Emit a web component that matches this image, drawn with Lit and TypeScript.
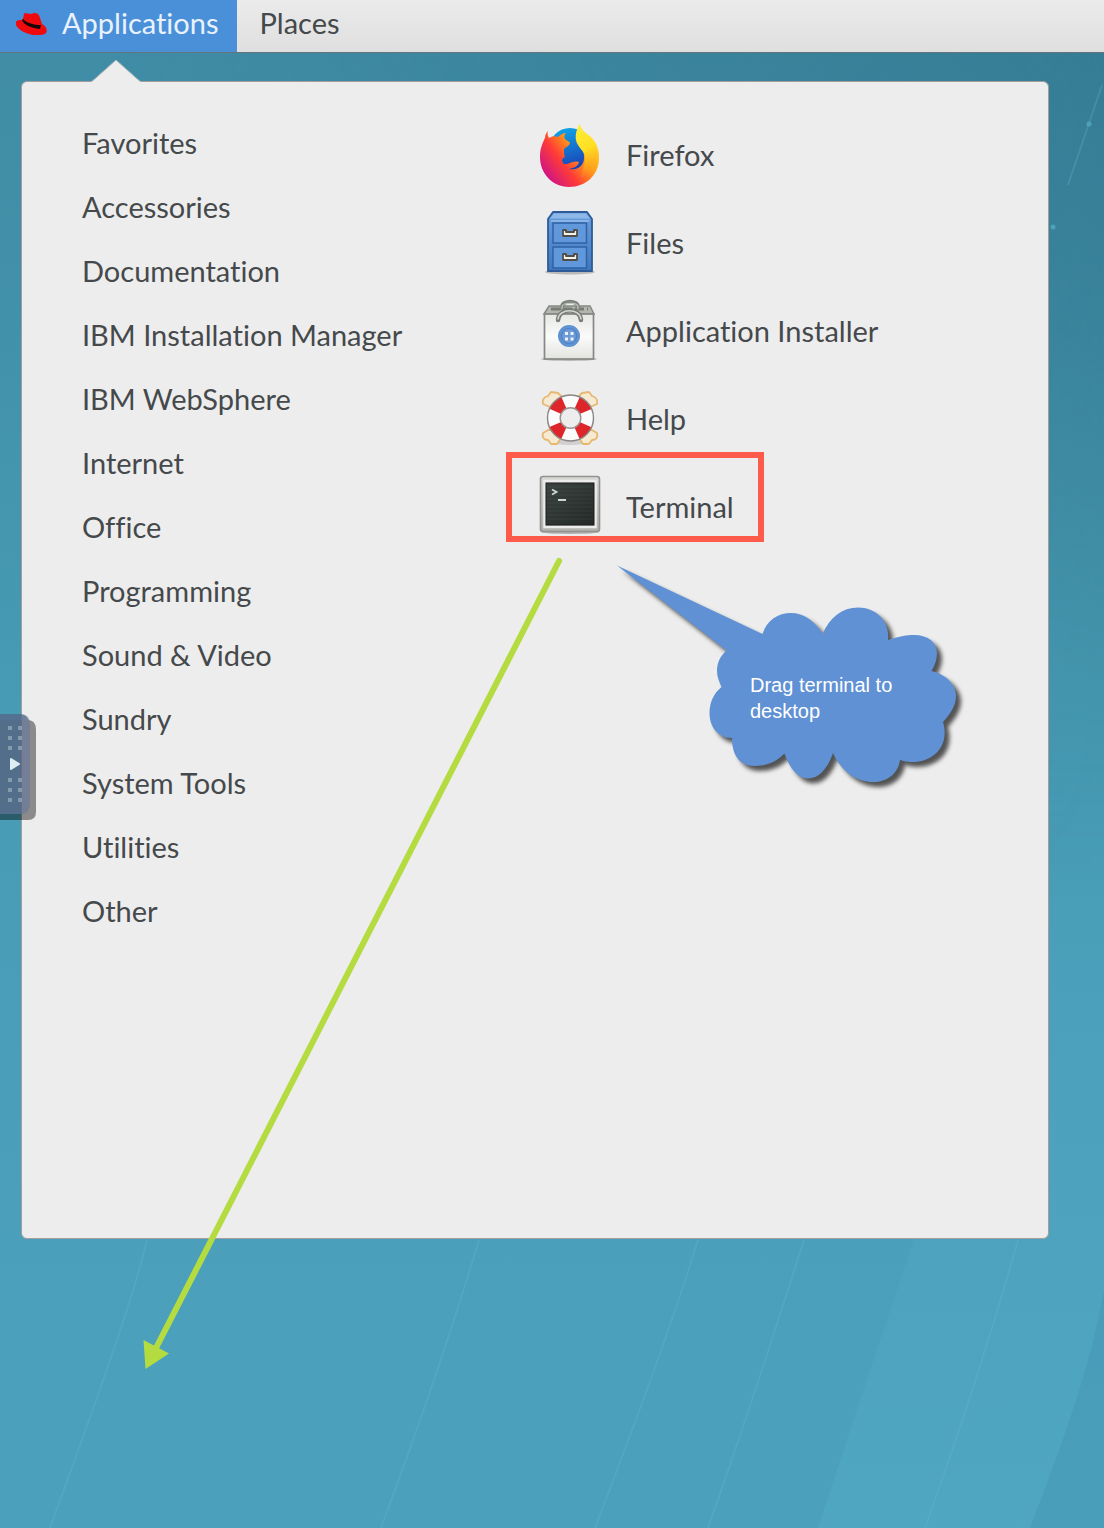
import { LitElement, html, css, svg } from "lit";
import { customElement, state } from "lit/decorators.js";

const hatIcon = html`<svg class="hat" viewBox="0 0 32 24" aria-hidden="true">
  <path d="M0 11C-1 15 3 19 10 22c7 3 17 3 20 0 2-3 0-7-4-9L24 7C23 3 21 2 18 2l-3 1-6-1C7 3 8 8 6 9 3 9 1 9 0 11Z" fill="#f00a0e"/>
  <path d="M6 9c1 4 8 8 18 9l1-4C18 14 11 12 7 8Z" fill="#160608"/>
</svg>`;

const firefoxIcon = svg`
  <defs>
    <linearGradient id="flame" x1="0.900" y1="0.200" x2="0.100" y2="0.800">
      <stop offset="0" stop-color="#ffd226"/><stop offset=".35" stop-color="#ff961a"/>
      <stop offset=".65" stop-color="#ff3b38"/><stop offset="1" stop-color="#d01583"/>
    </linearGradient>
    <linearGradient id="globe" x1=".3" y1="0" x2=".6" y2="1">
      <stop offset="0" stop-color="#10a4e8"/><stop offset="1" stop-color="#1b3fb4"/>
    </linearGradient>
    <linearGradient id="tail" x1="0" y1="0" x2=".3" y2="1">
      <stop offset="0" stop-color="#fff03a"/><stop offset=".55" stop-color="#ffdf22"/><stop offset="1" stop-color="#ffa51a" stop-opacity="0"/>
    </linearGradient>
  </defs>
  <circle cx="32" cy="26" r="21" fill="url(#globe)"/>
  <path d="M10 8c-1 3 0 5 1 7 3-2 6-2 9-1 2-2 5-4 8-4-2 2-2 4-1 6 2 2 4 2 5 4-1 4-6 4-6 7 0 3 0 5 1 7-3 1-4 4-1 7 5 1 8-4 15-2-1 4-5 6-10 7 8 2 15-3 15-11 1-7-4-9-6-15-1-5 0-10 1-15 3 5 8 7 12 12 5 5 8 11 8 18 0 17-13 29-30 29S2 50 2 34c0-9 3-15 5-19 0-3 1-5 3-7Z" fill="url(#flame)"/>
  <path d="M42 1c1 7 7 9 12 14 5 6 8 13 7 20-1 9-8 17-18 22 0-8 5-15 4-24-1-6-8-9-9-16-1-6 1-12 4-16Z" fill="url(#tail)"/>`;

const filesIcon = svg`
  <defs>
    <linearGradient id="cabinet" x1="0" y1="0" x2="0" y2="1">
      <stop offset="0" stop-color="#6a9fdd"/><stop offset="1" stop-color="#3f77bf"/>
    </linearGradient>
  </defs>
  <ellipse cx="32" cy="61" rx="25" ry="2.500" fill="#000" opacity=".22"/>
  <path d="M15 1h34l5 7v52H10V8Z" fill="url(#cabinet)" stroke="#2e5b97" stroke-width="1.800" stroke-linejoin="round"/>
  <path d="M16 2.500h32l4 5H12Z" fill="#8db8e8"/>
  <path d="M13 10h38" stroke="#88b4e6" stroke-width="2"/>
  <rect x="15" y="12" width="33.500" height="20" fill="#6098db" stroke="#2f62a6" stroke-width="1.500"/>
  <rect x="15" y="36" width="33.500" height="21" fill="#6098db" stroke="#2f62a6" stroke-width="1.500"/>
  <g fill="#f4f3eb" stroke="#514e48" stroke-width="1.800" stroke-linejoin="round">
    <path d="M25 19v6h14v-6h-3v2h-8v-2Z"/>
    <path d="M25 43v6h14v-6h-3v2h-8v-2Z"/>
  </g>`;

const installerIcon = svg`
  <defs>
    <linearGradient id="bag" x1="0" y1="0" x2="0" y2="1">
      <stop offset="0" stop-color="#e6e8e4"/><stop offset=".5" stop-color="#fbfbfa"/><stop offset="1" stop-color="#e3e4e0"/>
    </linearGradient>
  </defs>
  <ellipse cx="31" cy="60" rx="28" ry="2" fill="#000" opacity=".22"/>
  <path d="M6 15l5-8h41l4 8Z" fill="#b2b6af" stroke="#858983" stroke-width="1.500"/>
  <path d="M13 10h37" stroke="#777c75" stroke-width="3" stroke-dasharray="9 3"/>
  <path d="M24 11V8c0-7 16-7 16 0v3" fill="none" stroke="#80857e" stroke-width="4"/>
  <path d="M24 10V8c0-5 16-5 16 0v2" fill="none" stroke="#c9ccc6" stroke-width="1.200"/>
  <rect x="6.500" y="15" width="49" height="45" fill="url(#bag)" stroke="#858983" stroke-width="1.700"/>
  <path d="M20 21c1-13 22-13 23 0" fill="none" stroke="#777d76" stroke-width="4.500" stroke-linecap="round"/>
  <path d="M20 20c1-11 22-11 23 0" fill="none" stroke="#d4d7d2" stroke-width="1.500" stroke-linecap="round"/>
  <circle cx="31" cy="37" r="11" fill="#5f92d2"/>
  <circle cx="31" cy="37" r="7.500" fill="#6c9bd6" stroke="#4d80c3" stroke-width="1"/>
  <g fill="#edf2f8"><rect x="27" y="33" width="3" height="3"/><rect x="32.500" y="33" width="3" height="3"/><rect x="27" y="38.500" width="3" height="3"/><rect x="32.500" y="38.500" width="3" height="3"/></g>`;

const helpIcon = svg`
  <ellipse cx="32" cy="55" rx="20" ry="3" fill="#000" opacity=".12"/>
  <g fill="#f7ead2" stroke="#e6b873" stroke-width="1.800" stroke-linejoin="round">
    <path d="M12 20l-7-3c-1-4 1-7 5-8l3-4 7 1 4 4Z"/>
    <path d="M52 20l7-3c1-4-1-7-5-8l-3-4-7 1-4 4Z"/>
    <path d="M12 42l-7 4c-1 3 0 7 5 7l3 4h6l4-6Z"/>
    <path d="M52 42l7 4c1 3 0 7-5 7l-3 4h-6l-4-6Z"/>
  </g>
  <circle cx="32.500" cy="31" r="16.500" fill="none" stroke="#fbfbfb" stroke-width="13"/>
  <circle cx="32.500" cy="31" r="16.500" fill="none" stroke="#dd252a" stroke-width="13" pathLength="80" stroke-dasharray="9.500 10.500" stroke-dashoffset="-5.300"/>
  <circle cx="32.500" cy="31" r="23" fill="none" stroke="#8b8585" stroke-width="1.400"/>
  <circle cx="32.500" cy="31" r="10.300" fill="none" stroke="#9a9292" stroke-width="1.400"/>`;

const terminalIcon = svg`
  <defs>
    <linearGradient id="screen" x1="0" y1="0" x2="1" y2="1">
      <stop offset="0" stop-color="#3a423f"/><stop offset="1" stop-color="#222927"/>
    </linearGradient>
    <linearGradient id="bezel" x1="0" y1="0" x2="0" y2="1">
      <stop offset="0" stop-color="#d8d8d6"/><stop offset="1" stop-color="#b1b1ae"/>
    </linearGradient>
  </defs>
  <ellipse cx="32" cy="57" rx="29" ry="2" fill="#000" opacity=".25"/>
  <rect x="2.500" y="1.500" width="59" height="55" rx="2.500" fill="url(#bezel)" stroke="#92928f" stroke-width="1.600"/>
  <rect x="6.500" y="6" width="51" height="46" fill="none" stroke="#ececea" stroke-width="2.500"/>
  <rect x="8" y="8" width="48" height="42" fill="url(#screen)" stroke="#1c2120" stroke-width="1"/>
  <path d="M9 12h46M9 16h46M9 20h46M9 24h46M9 28h46M9 32h46M9 36h46M9 40h46M9 44h46" stroke="#fff" stroke-width="1" opacity=".05"/>
  <path d="M14 14.500l4.500 2.500-4.500 2.500" fill="none" stroke="#cfd5d2" stroke-width="1.800"/>
  <path d="M20 25h8" stroke="#cfd5d2" stroke-width="2"/>`;

const categories = [
  "Favorites", "Accessories", "Documentation", "IBM Installation Manager",
  "IBM WebSphere", "Internet", "Office", "Programming", "Sound & Video",
  "Sundry", "System Tools", "Utilities", "Other",
];

const apps = [
  { name: "Firefox", icon: firefoxIcon },
  { name: "Files", icon: filesIcon },
  { name: "Application Installer", icon: installerIcon },
  { name: "Help", icon: helpIcon },
  { name: "Terminal", icon: terminalIcon, marked: true },
];

@customElement("app-root")
export class AppRoot extends LitElement {
  static styles = css`
    :host {
      position: relative;
      display: flex;
      flex-direction: column;
      min-height: 100vh;
      overflow: hidden;
      box-sizing: border-box;
      color: #45494b;
      font: 29px/32px Lato, "Open Sans", sans-serif;
      font-variant-ligatures: none;
      background: linear-gradient(180deg, #408ca6 0, #418fa8 250px, #479bb4 700px, #4b9fbb 1200px, #4ba1bc 100%);
    }
    button {
      font: inherit;
      font-variant-ligatures: inherit;
      color: inherit;
      background: none;
      border: 0;
      margin: 0;
      padding: 0;
      text-align: left;
    }
    ul { list-style: none; margin: 0; padding: 0; }
    .wallpaper {
      position: absolute;
      inset: 0;
      width: 100%;
      height: 100%;
    }
    .topbar {
      position: relative;
      display: flex;
      height: 53px;
      box-sizing: border-box;
      background: linear-gradient(#ebebeb, #dfdfdf);
      border-bottom: 1px solid #66757b;
    }
    .tab {
      display: flex;
      align-items: center;
      padding: 0 24px 6px 23px;
    }
    .tab.open {
      gap: 14px;
      padding: 0 18px 6px 16px;
      color: #e9f2fc;
      background: #4a90d9;
    }
    .hat { width: 32px; height: 24px; flex: none; }
    .desktop {
      position: relative;
      flex: 1;
      display: flex;
      padding: 28px 55px 289px 21px;
    }
    .menu {
      position: relative;
      flex: 1;
      display: grid;
      grid-template-columns: 456px 1fr;
      align-items: start;
      padding: 29px 40px 30px 60px;
      background: #ededed;
      border: 1px solid #a39e9b;
      border-radius: 6px;
    }
    .pointer {
      position: absolute;
      left: 69px;
      top: -23px;
      width: 50px;
      height: 25px;
    }
    .category { display: block; width: 100%; height: 64px; }
    .app {
      position: relative;
      display: flex;
      align-items: center;
      gap: 24px;
      height: 88px;
    }
    .icon { width: 64px; height: 64px; flex: none; }
    .mark {
      position: absolute;
      left: -32px;
      right: -30px;
      top: -11px;
      height: 90px;
      box-sizing: border-box;
      border: 6px solid #ff5b4d;
    }
    .handle {
      position: absolute;
      left: 0;
      top: 714px;
      width: 36px;
      height: 106px;
    }
    .handle svg { display: block; }
    .notes {
      position: absolute;
      left: 0;
      top: 0;
      pointer-events: none;
    }
    .cloud { filter: drop-shadow(5px 5px 2px rgba(0, 0, 0, 0.65)); }
    .note {
      position: absolute;
      left: 750px;
      top: 672px;
      width: 160px;
      margin: 0;
      color: #fff;
      font: 20px/26px "Liberation Sans", Arial, sans-serif;
    }
  `;

  @state() private open = true;

  private toggle() {
    this.open = !this.open;
  }

  render() {
    return html`
      <svg class="wallpaper" viewBox="0 0 1104 1528" preserveAspectRatio="none" aria-hidden="true">
        <defs>
          <linearGradient id="down" x1="0" y1="0" x2="0" y2="1">
            <stop offset="0" stop-color="#fff" stop-opacity=".5"/><stop offset=".35" stop-color="#fff" stop-opacity=".35"/><stop offset="1" stop-color="#fff" stop-opacity="0"/>
          </linearGradient>
          <mask id="fade"><rect width="1104" height="900" fill="url(#down)"/></mask>
          <linearGradient id="dark" x1="0" y1="0" x2="1" y2="0">
            <stop offset=".1" stop-color="#296c80" stop-opacity="0"/><stop offset="1" stop-color="#296c80"/>
          </linearGradient>
          <linearGradient id="band" x1="0" y1="0" x2="0" y2="1">
            <stop offset="0" stop-color="#57b3cc" stop-opacity="0"/><stop offset=".6" stop-color="#57b3cc" stop-opacity=".2"/><stop offset="1" stop-color="#57b3cc" stop-opacity=".3"/>
          </linearGradient>
        </defs>
        <rect width="1104" height="900" fill="url(#dark)" mask="url(#fade)"/>
        <path d="M1104 760C1020 900 940 1100 913 1243C880 1340 850 1430 818 1528H1030C1060 1450 1090 1370 1104 1290Z" fill="url(#band)"/>
        <path d="M1104 1290C1090 1370 1060 1450 1030 1528H1104Z" fill="#3f8fae" opacity=".12"/>
        <g fill="none" stroke="#67bdd5" stroke-width="2" opacity=".25">
          <path d="M147 1240C135 1290 115 1350 50 1528M479 1240C455 1320 425 1410 381 1528M698 1240C670 1330 640 1410 595 1528M804 1240C775 1330 750 1410 708 1528M1018 1240C990 1340 960 1430 925 1528M1102 85L1068 185"/>
        </g>
        <circle cx="1089" cy="124" r="2.500" fill="#4ba2b9"/>
        <circle cx="1053" cy="227" r="2.500" fill="#4ba2b9"/>
      </svg>

      <nav class="topbar">
        <button class="tab open" aria-expanded=${this.open} @click=${this.toggle}>${hatIcon}Applications</button>
        <button class="tab">Places</button>
      </nav>

      <main class="desktop">
        ${this.open
          ? html`<section class="menu">
              <svg class="pointer" viewBox="0 0 50 25" aria-hidden="true">
                <path d="M0 25V23L25 1 50 23V25Z" fill="#ededed"/>
                <path d="M1 22.500L25 1 49 22.500" fill="none" stroke="#a9b3b4" stroke-width="1"/>
              </svg>
              <ul>
                ${categories.map((name) => html`<li><button class="category">${name}</button></li>`)}
              </ul>
              <ul>
                ${apps.map(
                  (app) => html`<li>
                    <button class="app">
                      <svg class="icon" viewBox="0 0 64 64" aria-hidden="true">${app.icon}</svg>
                      ${app.name}
                      ${app.marked ? html`<span class="mark"></span>` : null}
                    </button>
                  </li>`,
                )}
              </ul>
            </section>`
          : null}
      </main>

      <button class="handle" aria-label="Show panel">
        <svg width="36" height="106" viewBox="0 0 36 106" aria-hidden="true">
          <path d="M0 6H28Q36 6 36 16V98Q36 106 28 106H0Z" fill="#000" opacity=".41"/>
          <path d="M0 0H20Q30 0 30 10V90Q30 100 20 100H0Z" fill="#68789d" opacity=".66"/>
          <path d="M0 0H20Q26 0 28 6H0Z" fill="#4a607e" opacity=".5"/>
          <path d="M8 14h4m6 0h4M8 24h4m6 0h4M8 34h4m6 0h4M8 66h4m6 0h4M8 76h4m6 0h4M8 86h4m6 0h4" stroke="#8799ad" stroke-width="4"/>
          <path d="M11 45L19 50 11 55Z" fill="#dcedf3" stroke="#dcedf3" stroke-width="2" stroke-linejoin="round"/>
        </svg>
      </button>

      <svg class="notes" width="1104" height="1400" viewBox="0 0 1104 1400" aria-hidden="true">
        <path d="M559 561L155 1350" stroke="#b4dc41" stroke-width="6" stroke-linecap="round"/>
        <path d="M143.500 1340L169 1353.500 145.500 1369Z" fill="#b4dc41"/>
        <path class="cloud" fill="#6091d4" d="M617 565.500L762.500 634C767 620 778 613 791 613C804 613 815 621 822.500 634C830 617 842 607.500 858 607.500C877 607.500 890 622 888 640C900 636 907 635 914 635C936 635 943 652 931.500 671C946 674 956 685 956 696C956 706 950 714 943 722C950 745 934 762 912 762C906 762 904 761 900 760C898 774 887 782 873 782C858 782 842 773 833 753C827 770 818 778.500 808 778.500C798 778.500 790 769 784.500 753.500C775 763 765 766 755 766C741 766 732 757 732 738C718 738 709.500 727 709.500 713C709.500 702 714 693 721.500 687C719 681 717 677 717 671C717 663 720 656 726.500 650.500Z"/>
      </svg>
      <p class="note">Drag terminal to desktop</p>
    `;
  }
}
